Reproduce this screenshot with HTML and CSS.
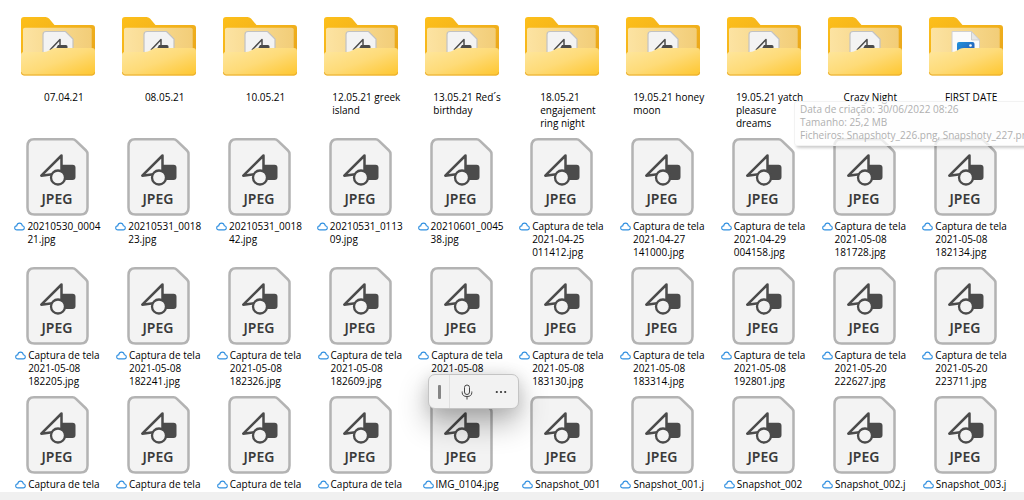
FILE: index.html
```html
<!DOCTYPE html>
<html lang="pt">
<head>
<meta charset="utf-8">
<title>Explorador de ficheiros</title>
<link rel="stylesheet" href="styles.css">
</head>
<body>
<svg class="defs" aria-hidden="true">
  <defs>
    <linearGradient id="g-back" x1="0" y1="0" x2="1" y2="1"><stop offset="0" stop-color="#fdbf1a"/><stop offset="1" stop-color="#e6a31d"/></linearGradient>
    <linearGradient id="g-inner" x1="0" y1="0" x2="1" y2="0"><stop offset="0" stop-color="#fce3a2"/><stop offset="1" stop-color="#f2cd78"/></linearGradient>
    <linearGradient id="g-front" x1="0" y1="0" x2="1" y2="1"><stop offset="0" stop-color="#fee7a0"/><stop offset="0.5" stop-color="#fedb78"/><stop offset="1" stop-color="#fec62e"/></linearGradient>
    <linearGradient id="g-photo" x1="0" y1="0" x2="1" y2="1"><stop offset="0" stop-color="#1f93dc"/><stop offset="1" stop-color="#2a4fae"/></linearGradient>
    <symbol id="shapes" viewBox="20 14 39 36">
      <rect x="40" y="26.700" width="17.500" height="15.300" rx="3" fill="#4b4b4b"/>
      <path d="M43.500 17.500 23.300 37.700 43.500 35Z" fill="#f3f3f3" stroke="#4b4b4b" stroke-width="2.500" stroke-linejoin="round"/>
      <circle cx="40" cy="39.500" r="7" fill="#f3f3f3" stroke="#4b4b4b" stroke-width="2.300"/>
    </symbol>
    <symbol id="jpeg" viewBox="0 0 78 78">
      <path d="M16 1.300H54.500Q56.500 1.300 58 2.800L68 12.500Q69.500 14 69.500 16V69.500Q69.500 76.500 62.500 76.500H16.500Q9.500 76.500 9.500 69.500V8.300Q9.500 1.300 16 1.300Z" fill="#f3f3f3" stroke="#b3b3b3" stroke-width="2.500"/>
      <use href="#shapes" x="20" y="14" width="39" height="36"/>
      <text class="jpeg-text" x="39" y="66" text-anchor="middle">JPEG</text>
    </symbol>
    <symbol id="folder-back" viewBox="0 0 78 78">
      <path d="M3 11Q3 8 6 8H27.500Q29.500 8 31 9.500L36.500 16H74Q77 16 77 19V60H3Z" fill="url(#g-back)"/>
      <path d="M5 20.500Q5 18.700 7 18.700H71.500Q73.700 18.700 73.700 20.500V56H5Z" fill="url(#g-inner)"/>
    </symbol>
    <symbol id="folder-front" viewBox="0 0 78 78">
      <path d="M3 46Q3 43 6 43H26Q29 43 31.500 41.300L34 39.800Q35.500 39 38 39H74Q77 39 77 42V63.500Q77 66.500 74 66.500H6Q3 66.500 3 63.500Z" fill="url(#g-front)"/>
      <path d="M3.400 63.300Q3.600 66 6 66H74Q76.400 66 76.600 63.300" fill="none" stroke="#e9ac2b" stroke-width="1"/>
    </symbol>
    <symbol id="folder-jpeg" viewBox="0 0 78 78">
      <use href="#folder-back" width="78" height="78"/>
      <path d="M28 22.500H47.500L55 30V50H25V25.500Q25 22.500 28 22.500Z" fill="#f3f3f3" stroke="#c2c2c2" stroke-width="1.200"/>
      <path d="M32 41 42 30.500V37" fill="none" stroke="#4b4b4b" stroke-width="1.500" stroke-linejoin="round"/>
      <path d="M32 41 38 39.500 40 36H48Q49.500 36 49.500 37.500V42H32Z" fill="#4b4b4b"/>
      <use href="#folder-front" width="78" height="78"/>
    </symbol>
    <symbol id="folder-photo" viewBox="0 0 78 78">
      <use href="#folder-back" width="78" height="78"/>
      <path d="M26 22.500H45.500L53.500 31V50H26Z" fill="#fbfbfb" stroke="#d0d0d0"/>
      <path d="M45.500 22.500V31H53.500Z" fill="#e6e6e6" stroke="#c6c6c6" stroke-width=".8"/>
      <rect x="31" y="33" width="17.500" height="14" rx="2" fill="url(#g-photo)"/>
      <circle cx="44.500" cy="36.500" r="1.300" fill="#fff"/>
      <path d="M34 42.500 37.500 40.500 41 42.500Z" fill="#b7dff5"/>
      <use href="#folder-front" width="78" height="78"/>
    </symbol>
    <symbol id="cloud" viewBox="0 0 11 9">
      <path d="M2.900 7.900C1.500 7.900.7 7 .7 5.900S1.600 3.900 2.700 3.900C3 2.100 4.100 1.100 5.600 1.100S8 2.100 8.300 3.700C9.500 3.800 10.300 4.700 10.300 5.800S9.400 7.900 8.200 7.900Z" fill="#fff" stroke="#2f8fe0" stroke-width="1.100"/>
    </symbol>
  </defs>
</svg>
<main class="files">
  <ul class="grid" id="grid"></ul>
</main>
<footer class="statusbar"></footer>
<div class="tooltip" role="tooltip">
  <div>Data de criação: 30/06/2022 08:26</div>
  <div>Tamanho: 25,2 MB</div>
  <div>Ficheiros: Snapshoty_226.png, Snapshoty_227.pn</div>
</div>
<div class="voicebar" role="toolbar" aria-label="Voz">
  <span class="grip"></span>
  <button class="tool" type="button" aria-label="Microfone">
    <svg width="12" height="16" viewBox="0 0 12 16" fill="none" stroke="#444" stroke-width="1"><rect x="3.500" y="1" width="5" height="9.500" rx="2.500"/><path d="M1.200 7.500V8.500Q1.200 12.500 6 12.500T10.800 8.500V7.500M6 12.500V15.500"/></svg>
  </button>
  <button class="tool" type="button" aria-label="Mais opções">
    <svg width="12" height="4" viewBox="0 0 12 4" fill="#333"><circle cx="1.800" cy="2" r="1.100"/><circle cx="6" cy="2" r="1.100"/><circle cx="10.200" cy="2" r="1.100"/></svg>
  </button>
</div>
<script src="script.js"></script>
</body>
</html>
```
FILE: styles.css
```css
* { box-sizing: border-box; }

body {
  margin: 0;
  height: 100vh;
  display: flex;
  flex-direction: column;
  overflow: hidden;
  background: #fff;
  color: #000;
  font: 10px/13px "Open Sans", "Noto Sans", sans-serif;
}

.defs { position: absolute; width: 0; height: 0; }

.files {
  flex: 1;
  min-height: 0;
  overflow: hidden;
  padding: 9px 9px 0 7px;
}

.grid {
  display: grid;
  grid-template-columns: repeat(10, 1fr);
  grid-auto-rows: 129px;
  margin: 0;
  padding: 0;
  list-style: none;
}

.tile {
  display: flex;
  flex-direction: column;
  align-items: center;
  gap: 4px;
  min-width: 0;
}

.thumb { width: 78px; height: 78px; flex: none; }

.jpeg-text {
  font: 600 14px "Noto Sans", "Open Sans", sans-serif;
  fill: #3a3a3a;
}

.label {
  display: flex;
  gap: 2px;
  white-space: pre;
}

.label.folder { padding-left: 13px; }

.cloud { width: 11px; height: 9px; flex: none; margin-top: 2px; }

.statusbar { flex: none; height: 8px; background: #f0f0f0; }

.tooltip {
  position: absolute;
  top: 101px;
  left: 794px;
  right: -8px;
  padding: 1px 5px 3px;
  border: 1px solid #f2f2f2;
  border-radius: 3px;
  background: rgba(253, 253, 253, 0.75);
  box-shadow: 2px 2px 3px rgba(0, 0, 0, 0.2);
  color: #b0b0b0;
  white-space: nowrap;
}

.voicebar {
  position: absolute;
  top: 374px;
  left: 428px;
  display: flex;
  height: 35px;
  border: 1px solid #c4c4c4;
  border-radius: 7px;
  background: #f2f2f2;
  box-shadow: 0 14px 30px rgba(0, 0, 0, 0.3), 0 2px 16px rgba(0, 0, 0, 0.12);
}

.grip {
  display: flex;
  align-items: center;
  justify-content: center;
  width: 21px;
  border-right: 1px solid #e0e0e0;
}

.grip::before {
  content: "";
  width: 3px;
  height: 14px;
  border-radius: 1px;
  background: #858585;
}

.tool {
  display: flex;
  align-items: center;
  justify-content: center;
  width: 34px;
  padding: 0;
  border: 0;
  background: none;
}
```
FILE: script.js
```js
const folders = [
  "07.04.21", "08.05.21", "10.05.21", "12.05.21 greek\nisland", "13.05.21 Red´s\nbirthday",
  "18.05.21\nengajement\nring night", "19.05.21 honey\nmoon", "19.05.21 yatch\npleasure\ndreams",
  "Crazy Night", "FIRST DATE"
];

const capture = (date, time) => `Captura de tela\n${date}\n${time}.jpg`;

const files = [
  "20210530_0004\n21.jpg", "20210531_0018\n23.jpg", "20210531_0018\n42.jpg",
  "20210531_0113\n09.jpg", "20210601_0045\n38.jpg",
  capture("2021-04-25", "011412"), capture("2021-04-27", "141000"), capture("2021-04-29", "004158"),
  capture("2021-05-08", "181728"), capture("2021-05-08", "182134"),
  capture("2021-05-08", "182205"), capture("2021-05-08", "182241"), capture("2021-05-08", "182326"),
  capture("2021-05-08", "182609"), "Captura de tela\n2021-05-08", capture("2021-05-08", "183130"),
  capture("2021-05-08", "183314"), capture("2021-05-08", "192801"), capture("2021-05-20", "222627"),
  capture("2021-05-20", "223711"),
  "Captura de tela", "Captura de tela", "Captura de tela", "Captura de tela", "IMG_0104.jpg",
  "Snapshot_001", "Snapshot_001.j", "Snapshot_002", "Snapshot_002.j", "Snapshot_003.j"
];

const thumb = id => `<svg class="thumb" aria-hidden="true"><use href="#${id}"/></svg>`;
const cloud = '<svg class="cloud" aria-hidden="true"><use href="#cloud"/></svg>';

document.getElementById("grid").innerHTML =
  folders.map(name =>
    `<li class="tile">${thumb(name === "FIRST DATE" ? "folder-photo" : "folder-jpeg")}<div class="label folder"><span>${name}</span></div></li>`
  ).join("") +
  files.map(name =>
    `<li class="tile">${thumb("jpeg")}<div class="label">${cloud}<span>${name}</span></div></li>`
  ).join("");
```
